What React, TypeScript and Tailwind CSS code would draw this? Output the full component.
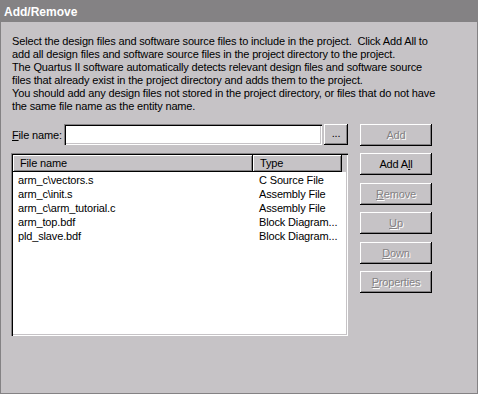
const raised = 'shadow-[inset_-1px_-1px_0_#000,inset_1px_1px_0_#fff,inset_-2px_-2px_0_#848284]'
const sunken = 'shadow-[inset_1px_1px_0_#848284,inset_2px_2px_0_#000,inset_-1px_-1px_0_#fff,inset_-2px_-2px_0_#c6c3c6]'

function Btn({ label, hot, disabled, className = '' }: { label: string; hot?: number; disabled?: boolean; className?: string }) {
  const parts =
    hot === undefined ? [label] : [label.slice(0, hot), label[hot], label.slice(hot + 1)]
  return (
    <div
      className={`w-[72px] h-[22px] flex items-center justify-center bg-[#c6c3c6] ${raised} ${
        disabled ? 'text-[#848284] [text-shadow:1px_1px_0_#fff]' : 'text-black'
      } ${className}`}
    >
      {hot === undefined ? (
        label
      ) : (
        <span>
          {parts[0]}
          <u className="underline-offset-[1px]">{parts[1]}</u>
          {parts[2]}
        </span>
      )}
    </div>
  )
}

export default function App() {
  const files = [
    { name: 'arm_c\\vectors.s', type: 'C Source File' },
    { name: 'arm_c\\init.s', type: 'Assembly File' },
    { name: 'arm_c\\arm_tutorial.c', type: 'Assembly File' },
    { name: 'arm_top.bdf', type: 'Block Diagram...' },
    { name: 'pld_slave.bdf', type: 'Block Diagram...' },
  ]

  return (
    <div className="w-[478px] h-[394px] bg-[#c6c3c6] border border-[#848284] font-['Liberation_Sans',Arial,sans-serif] text-[11px] tracking-[-0.15px] text-black overflow-hidden">
      {/* Title bar */}
      <div className="h-[21px] bg-[#848284] text-white font-bold text-[12px] tracking-normal leading-[14px] pl-[3px] pt-[4px]">
        Add/Remove
      </div>

      {/* Description */}
      <p className="mt-[13px] pl-[11px] leading-[13px] whitespace-pre">
        {'Select the design files and software source files to include in the project.  Click Add All to'}
        <br />
        add all design files and software source files in the project directory to the project.
        <br />
        The Quartus II software automatically detects relevant design files and software source
        <br />
        files that already exist in the project directory and adds them to the project.
        <br />
        {'You should add any design files not stored in the project directory, or files that do not have'}
        <br />
        the same file name as the entity name.
      </p>

      <div className="flex mt-[11px] pl-[10px]">
        {/* Left side */}
        <div className="w-[337px]">
          <div className="flex items-center h-[22px]">
            <span className="ml-[1px] w-[52px]">
              <u className="underline-offset-[1px]">F</u>ile name:
            </span>
            <div className={`w-[258px] h-[21px] bg-white self-start ${sunken}`} />
            <div className={`ml-[2px] w-[24px] h-[21px] self-start flex items-end justify-center pb-[4px] ${raised}`}>
              ...
            </div>
          </div>

          <div className={`mt-[7px] h-[183px] bg-white p-[2px] ${sunken}`}>
            <div className="flex h-[17px] bg-[#c6c3c6] leading-[17px]">
              <div className={`w-[240px] pl-[7px] ${raised}`}>File name</div>
              <div className={`w-[89px] pl-[7px] ${raised}`}>Type</div>
            </div>
            <div className="pt-[1px]">
              {files.map((f) => (
                <div key={f.name} className="flex h-[14px] leading-[14px] whitespace-pre">
                  <div className="w-[240px] pl-[5px]">{f.name}</div>
                  <div className="pl-[6px]">{f.type}</div>
                </div>
              ))}
            </div>
          </div>
        </div>

        {/* Buttons */}
        <div className="ml-[12px] flex flex-col">
          <Btn label="Add" disabled />
          <Btn label="Add All" hot={5} className="mt-[7px]" />
          <Btn label="Remove" hot={0} disabled className="mt-[8px]" />
          <Btn label="Up" hot={0} disabled className="mt-[7px]" />
          <Btn label="Down" hot={0} disabled className="mt-[8px]" />
          <Btn label="Properties" hot={0} disabled className="mt-[7px]" />
        </div>
      </div>
    </div>
  )
}
